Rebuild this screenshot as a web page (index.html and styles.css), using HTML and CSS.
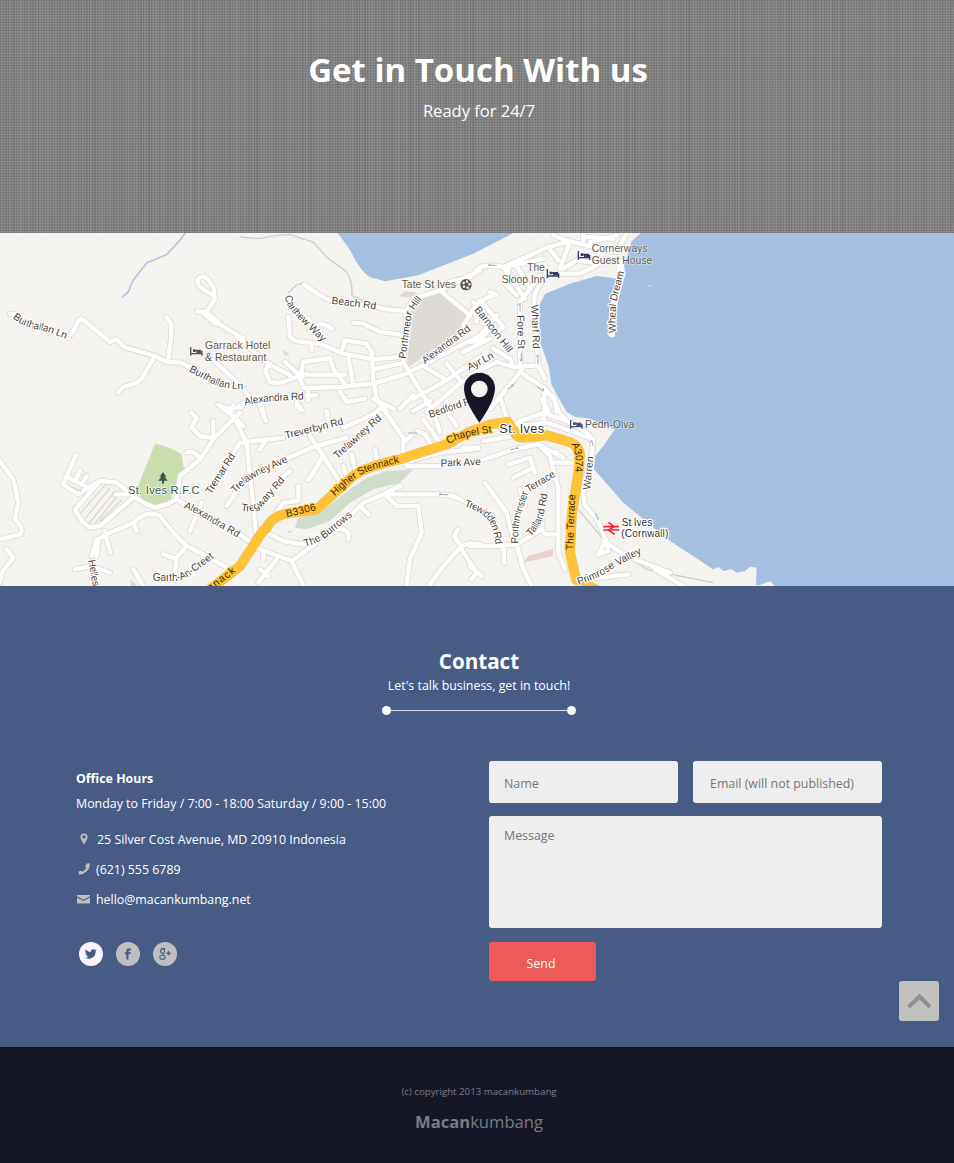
FILE: index.html
```html
<!DOCTYPE html>
<html lang="en">
<head>
<meta charset="utf-8">
<title>Macankumbang - Contact</title>
<link rel="stylesheet" href="styles.css">
</head>
<body>
<header class="hero">
  <div class="wrap">
    <h1>Get in Touch With us</h1>
    <p>Ready for 24/7</p>
  </div>
</header>

<svg class="map" viewBox="0 0 2862 1059" preserveAspectRatio="none" role="img" aria-label="Map of St. Ives">
  <defs>
    <g id="roads">
      <path transform="translate(0 -3)" d="M30 246h12M205 318L222 295 232 270Q240 258 250 264L330 330 350 322 372 345 465 372 500 390 545 392 575 410M500 257L514 275 514 310 504 388M465 372L425 440 405 455 370 465 355 482M640 190L600 165Q585 150 600 135Q620 130 640 165L645 200 620 240 592 238M620 240L660 275 645 275 612 245M655 275L730 320M640 385L690 430 730 470M655 518L680 530 725 525M700 520L690 545"/>
      <path transform="translate(720 -3)" d="M-10 315L90 400M135 390L185 435M90 395L75 415 90 450 120 453 200 425M85 395L150 430M190 465L180 440 190 390 270 378 280 410 320 465M200 428H315M190 468L300 465 400 455 500 425M325 378L340 455M305 355L315 325 380 335 395 360 400 450 410 500 440 540M240 335L310 365 400 382 480 375M400 412L480 395M145 255L150 315Q165 330 190 330L235 335M215 355V335M215 285L205 260M225 285Q240 265 275 290M340 272L370 275 420 300 480 308M192 158L240 190 270 205M410 225L440 232 500 237M500 237L490 390 510 425M500 237L520 200 600 175 720 115M600 175L690 250M500 425L720 310 770 250M510 425L580 540 600 600M555 405L620 445 520 500M620 395L665 450 560 540M620 445L720 375M665 450L740 400M205 470V505M200 490H230M300 480L320 510 375 500M400 500L460 530M10 470L30 500 0 520M60 510L70 540M170 510L185 535M700 210L710 270M480 530L520 490"/>
      <path transform="translate(1410 -3)" d="M-60 150L0 135 30 105 60 100 100 105 235 45 300 28 350 40 440 60M100 105L165 200M135 95L175 160M120 100L100 150 140 190M235 45L265 85M300 28L270 110M130 100L220 80M270 125L330 125 380 100M280 110L320 85 390 95M230 120L195 185 190 230 205 400M210 130L150 210 150 400M250 10L300 30M340 5V40M350 15L430 20M360 30L440 10M440 60L470 5M120 380L130 405 205 400 225 440M150 420L225 470 255 505 260 540M150 420L90 495 60 530M90 495L115 570M-20 280L20 215 75 185M30 205L100 285 80 300M0 330L30 325 60 290M-20 360L60 320M70 350L120 380M0 430L80 390 130 405M225 470L220 570M165 400L150 420M60 180L80 190"/>
      <path transform="translate(0 519)" d="M-5 160L40 220 55 290 45 340Q75 370 60 385L0 400M20 430L40 455 5 500 0 530M228 147L200 210 190 235 235 265 265 245 300 225 350 230 400 270M240 195L225 225M260 210L245 235M205 215L265 245M300 225L225 310 245 345 270 365 300 360 400 275M345 265H405M400 270L430 290 465 305 500 295 530 280 540 210 600 160 640 100 700 40 720 20M575 20L590 35 575 65 600 90 630 95M560 140Q575 130 600 155M640 45V95M540 285L560 300M720 110L630 250M605 290L570 375M680 300L720 240M290 450L295 400 320 385 400 350Q440 310 480 330L520 380 560 420 620 450 690 490M315 375L330 440M400 350L410 375M560 420L530 455 525 500M490 445L530 460M225 490L275 480 330 500M290 400L275 450M400 490L430 540M660 0L710 40 730 60"/>
      <path transform="translate(720 519)" d="M0 110L130 95M310 65L400 25 430 0M-20 30L20 110 45 350 50 390M60 0L78 45M60 130L75 105M260 15L265 50M170 0L180 10M210 90L250 150 300 230M145 155L215 125 320 95M205 222L250 150M110 320L130 290 175 285V240M100 240L150 195M410 -20L490 95V150M490 110L530 75 555 85 570 110M550 40L600 110M610 0L650 60M520 15L570 -15M500 180L600 180M510 165L600 140 715 128M490 155L500 180M80 380L130 405 190 415M0 385L60 430 155 465 190 540M155 465L230 410M330 330L370 290 430 265 480 240M430 265H600L640 270 680 290M440 270L470 300H535L545 380 510 460 500 535M360 300L385 325M290 370Q330 365 325 400M110 460L55 530M60 490L85 510M70 440V460M655 370Q630 390 665 420L610 480 570 535M665 420L690 412 720 415M665 430L710 500 695 520M335 145L345 190M405 130L410 160M310 180L320 215"/>
      <path transform="translate(1410 519)" d="M130 60L150 45 220 20 290 45M215 -20L235 15M250 -30L265 15M235 50L370 100M150 60L230 50M30 165L130 130 205 115 240 150 265 250 265 440 285 490M205 115L280 155M240 135L260 140M245 170H310M115 175L180 155 195 200M130 215L190 185M45 230L110 320 130 400M150 250L165 300M0 420H60L140 415 215 370M100 420L103 470M140 415L160 490 185 540M225 230L215 370 225 385H265M410 400L385 445 415 435 410 410M400 405L470 450 600 500 555 490 640 540M345 520L475 505M0 480L35 510M40 105L130 90M-20 125L25 125"/>
    </g>
    <path id="coast-road" d="M1670 530L1700 564 1745 588Q1785 612 1778 645L1762 720 1750 779 1754 815 1795 865 1818 925"/>
    <path id="main-road" d="M610 1085L720 999 765 930Q785 895 800 885Q815 850 860 842L950 829 1060 729Q1100 700 1200 679L1340 634 1410 596 1470 575 1523 566 1545 600Q1552 614 1570 614L1640 607 1710 627Q1738 640 1740 665L1735 719 1715 849 1710 959 1728 1040 1790 1070"/>
    <g id="bed"><path d="M0 0V26M0 20H34M34 12V26M9 11H30" fill="none" stroke="currentColor" stroke-width="4"/><path d="M7 7h8v8H7zM17 8h15v10H17z" fill="currentColor"/></g>
    <g class="tracks">
      <path id="t-burth1" d="M38 255Q70 282 110 289T230 332"/>
      <path id="t-burth2" d="M566 415L630 448Q660 466 720 469L800 468"/>
      <path id="t-beach" d="M994 212L1180 236"/>
      <path id="t-carthew" d="M854 190Q862 225 890 252L1000 360"/>
      <path id="t-porthmeor" d="M1217 378L1234 250Q1238 232 1290 170"/>
      <path id="t-alex1" d="M1275 394L1450 264"/>
      <path id="t-alex2" d="M735 518Q780 502 960 498"/>
      <path id="t-barnoon" d="M1422 230L1550 394"/>
      <path id="t-fore" d="M1551 247L1556 390"/>
      <path id="t-wharf" d="M1594 215L1600 390"/>
      <path id="t-ayr" d="M1408 413L1520 356"/>
      <path id="t-wheal" d="M1847 300Q1845 220 1852 195L1885 70"/>
      <path id="t-bedford" d="M1290 555L1450 500"/>
      <path id="t-tremar" d="M633 785L730 632"/>
      <path id="t-alex3" d="M550 825Q590 840 620 860L740 930"/>
      <path id="t-garth" d="M458 1043H530Q556 1040 580 1020L690 938"/>
      <path id="t-helles" d="M265 982L285 1100"/>
      <path id="t-stenn" d="M585 1110L640 1068 750 985"/>
      <path id="t-trev" d="M857 617L1070 565"/>
      <path id="t-trel" d="M1012 679L1180 528"/>
      <path id="t-trela" d="M705 782Q745 738 790 720L910 665"/>
      <path id="t-treg" d="M722 832Q768 845 800 805L880 714"/>
      <path id="t-b33" d="M860 853L990 821"/>
      <path id="t-higher" d="M1004 790Q1060 735 1095 719T1250 677"/>
      <path id="t-burrows" d="M915 941Q960 930 1000 896L1090 822"/>
      <path id="t-chapel" d="M1345 633Q1400 603 1520 594"/>
      <path id="t-park" d="M1322 701L1480 694"/>
      <path id="t-trew" d="M1392 819Q1440 835 1462 858Q1488 890 1488 980"/>
      <path id="t-a30" d="M1714 633Q1727 660 1727 680L1725 780"/>
      <path id="t-warren" d="M1770 771L1786 620"/>
      <path id="t-terr" d="M1585 779L1690 716"/>
      <path id="t-porthm" d="M1555 932Q1553 870 1565 840L1600 730"/>
      <path id="t-tall" d="M1593 911Q1620 880 1630 850L1655 720"/>
      <path id="t-theterr" d="M1719 952L1729 700"/>
      <path id="t-prim" d="M1735 1056Q1800 1035 1840 1005L1960 942"/>
    </g>
  </defs>

  <rect class="land" width="2862" height="1059"/>
  <path class="water" d="M1013 0L1050 50Q1080 115 1110 132L1155 145 1255 127 1420 62 1540 0ZM1922 0L1895 25 1880 75 1855 137 1790 129 1710 152 1635 182 1618 217 1620 327 1645 397 1655 457 1700 537 1725 552 1765 556 1845 589 1810 639 1785 669 1782 709 1870 809 1930 859 2010 924 2140 1009 2155 1002 2170 1014 2195 1009 2210 1019 2235 1014 2250 1001 2270 1004 2268 1056H2280L2310 1045 2325 1059H2862V0Z"/>
  <path class="gray" d="M1235 232L1245 200 1315 177 1410 252 1390 287 1270 372 1220 407ZM1195 190L1215 175 1250 178 1240 195ZM848 352L865 360 868 370 852 365Z"/>
  <path class="park" d="M465 632Q510 640 545 664L550 699 560 709 530 754 510 804 465 819 430 804 410 769Z"/>
  <path class="meadow" d="M885 884L895 854 960 839 1050 769 1100 734 1160 714 1240 709 1200 749 1120 769 1050 809 990 864 920 889ZM860 897L878 890 870 900ZM390 1037L410 1059H395Z"/>
  <path class="pink" d="M1570 989L1585 969 1660 947 1658 969Z"/>
  <path class="footpath" d="M720 12L780 17 Q830 5 870 5L940 27 980 72 1040 117Q1060 150 1055 187L1090 202M865 180L890 155 912 150M1735 829L1810 919 1940 1009 2140 1049"/>
  <path class="stream" d="M556 0L540 22 500 65 440 90 398 144 385 177 365 194"/>
  <use href="#roads" class="casing"/>
  <use href="#coast-road" class="casing"/>
  <use href="#roads" class="surface"/>
  <use href="#coast-road" class="surface"/>
  <path class="pier" d="M1862 90L1865 125 1850 180 1838 230 1835 303"/>
  <path class="parking" d="M315 757L240 842M330 765L255 857M345 775L268 870M350 792L285 872M365 800L300 865M210 760L245 775"/>
  <use href="#main-road" class="main-casing"/>
  <use href="#main-road" class="main-surface"/>

  <g class="arrows">
    <path d="M1490 97H1465l8-5M1560 235v-25l-5 8M1564 360v25l-5-8M1614 395v-30l-5 8M1520 470l22-14h-9M1610 460l20 14v-9M1225 600h25l-6-5M1530 650l25-4-7-4M1345 785h-28l7-5M1780 640l-5-18-5 8M1787 840l8 22"/>
  </g>

  <g class="lbl">
    <text><textPath href="#t-burth1" textLength="172">Burthallan Ln</textPath></text>
    <text><textPath href="#t-burth2" textLength="175">Burthallan Ln</textPath></text>
    <text><textPath href="#t-beach" textLength="134">Beach Rd</textPath></text>
    <text><textPath href="#t-carthew" textLength="180">Carthew Way</textPath></text>
    <text><textPath href="#t-porthmeor" textLength="190">Porthmeor Hill</textPath></text>
    <text><textPath href="#t-alex1" textLength="172">Alexandra Rd</textPath></text>
    <text><textPath href="#t-alex2" textLength="178">Alexandra Rd</textPath></text>
    <text><textPath href="#t-barnoon" textLength="165">Barnoon Hill</textPath></text>
    <text><textPath href="#t-fore" textLength="101">Fore St</textPath></text>
    <text><textPath href="#t-wharf" textLength="132">Wharf Rd</textPath></text>
    <text><textPath href="#t-ayr" textLength="84">Ayr Ln</textPath></text>
    <text><textPath href="#t-wheal" textLength="186">Wheal Dream</textPath></text>
    <text><textPath href="#t-bedford" textLength="148">Bedford Rd</textPath></text>
    <text><textPath href="#t-tremar" textLength="138">Tremar Rd</textPath></text>
    <text><textPath href="#t-alex3" textLength="185">Alexandra Rd</textPath></text>
    <text><textPath href="#t-garth" textLength="205">Garth-An-Creet</textPath></text>
    <text><textPath href="#t-helles" textLength="80">Helles</textPath></text>
    <text><textPath href="#t-trev" textLength="180">Treverbyn Rd</textPath></text>
    <text><textPath href="#t-trel" textLength="180">Trelawney Rd</textPath></text>
    <text><textPath href="#t-trela" textLength="188">Trelawney Ave</textPath></text>
    <text><textPath href="#t-treg" textLength="172">Tregwary Rd</textPath></text>
    <text><textPath href="#t-burrows" textLength="172">The Burrows</textPath></text>
    <text><textPath href="#t-park" textLength="121">Park Ave</textPath></text>
    <text><textPath href="#t-trew" textLength="162">Trewidden Rd</textPath></text>
    <text><textPath href="#t-warren" textLength="100">Warren</textPath></text>
    <text><textPath href="#t-terr" textLength="97">Terrace</textPath></text>
    <text><textPath href="#t-porthm" textLength="158">Porthminster</textPath></text>
    <text><textPath href="#t-tall" textLength="140">Talland Rd</textPath></text>
    <text><textPath href="#t-prim" textLength="214">Primrose Valley</textPath></text>
  </g>
  <g class="lbl on-main">
    <text><textPath href="#t-stenn" textLength="154">Stennack</textPath></text>
    <text><textPath href="#t-b33" textLength="92">B3306</textPath></text>
    <text><textPath href="#t-higher" textLength="224">Higher Stennack</textPath></text>
    <text><textPath href="#t-chapel" textLength="136">Chapel St</textPath></text>
    <text><textPath href="#t-a30" textLength="86">A3074</textPath></text>
    <text><textPath href="#t-theterr" textLength="168">The Terrace</textPath></text>
  </g>
  <g class="lbl poi">
    <text x="615" y="347" textLength="196">Garrack Hotel</text>
    <text x="615" y="383" textLength="184">&amp; Restaurant</text>
    <text x="1205" y="166" textLength="163">Tate St Ives</text>
    <text x="1582" y="115" textLength="52">The</text>
    <text x="1505" y="151" textLength="131">Sloop Inn</text>
    <text x="1775" y="56" textLength="168">Cornerways</text>
    <text x="1775" y="92" textLength="182">Guest House</text>
    <text x="1755" y="586" textLength="148">Pedn-Olva</text>
  </g>
  <g class="lbl town">
    <text class="green" x="384" y="784" textLength="214">St. Ives R.F.C</text>
    <text class="big" x="1498" y="600" textLength="134">St. Ives</text>
    <text x="1865" y="878" textLength="92">St Ives</text>
    <text x="1864" y="912" textLength="141">(Cornwall)</text>
  </g>

  <use href="#bed" x="572" y="342" color="#5c5148"/>
  <use href="#bed" x="1735" y="54" color="#34386d"/>
  <use href="#bed" x="1642" y="109" color="#34386d"/>
  <use href="#bed" x="1712" y="561" color="#46516d"/>
  <g transform="translate(1398 155)"><circle r="17" fill="#5c5148"/><g fill="#eae6df"><circle cx="-7" cy="-5" r="4"/><circle cx="3" cy="-9" r="4"/><circle cx="10" cy="-1" r="4"/><circle cx="-6" cy="6" r="4"/><circle cx="5" cy="9" r="4"/></g></g>
  <path fill="#3a5a40" d="M489 717l10 14h-5l9 12h-11v9h-6v-9h-11l9-12h-5z"/>
  <path fill="none" stroke="#ed2939" stroke-width="5" d="M1810 881H1857M1810 891H1857M1825 868L1843 881 1825 891 1844 904"/>
  <circle cx="1949" cy="158" r="3" fill="#dce6f0"/>
  <path fill="#151726" d="M1438 569Q1392 503 1392 466A46 46 0 0 1 1485 466Q1485 503 1438 569Z"/>
  <circle cx="1438" cy="468" r="25" fill="#f4f3f0"/>
</svg>

<main class="contact">
  <div class="wrap">
    <div class="heading">
      <h2>Contact</h2>
      <p>Let's talk business, get in touch!</p>
      <div class="rule"></div>
    </div>
    <div class="columns">
      <section class="info">
        <h3>Office Hours</h3>
        <p class="hours">Monday to Friday / 7:00 - 18:00 Saturday / 9:00 - 15:00</p>
        <ul class="details">
          <li class="address"><svg width="16" height="14" viewBox="0 0 16 14"><path fill-rule="evenodd" d="M8 12.8C6.500 9.500 4.400 7.400 4.400 5A3.600 3.600 0 0 1 11.600 5C11.600 7.400 9.500 9.500 8 12.800ZM8 3.200a1.700 1.700 0 1 0 .1 0Z"/></svg>25 Silver Cost Avenue, MD 20910 Indonesia</li>
          <li><svg width="16" height="14" viewBox="0 0 16 14"><path d="M2.500 9.600L5.300 8.700 6.300 9.700Q9.200 8.600 10.300 5.400L9.200 4.200 10.700 1.600 13.500 1.200Q14.400 5.200 11 9.100 7 13 3.100 12.400Z"/></svg>(621) 555 6789</li>
          <li><svg width="16" height="14" viewBox="0 0 16 14"><path d="M1 3H14V4.300L7.500 7.700 1 4.300ZM1 5.500L7.500 9 14 5.500V11.500H1Z"/></svg>hello@macankumbang.net</li>
        </ul>
        <div class="social">
          <a class="on" aria-label="Twitter"><svg width="12" height="12" viewBox="0 0 24 24"><path d="M23.600 4.600a10 10 0 0 1-2.800.8 4.900 4.900 0 0 0 2.100-2.700 10 10 0 0 1-3.100 1.200A4.900 4.900 0 0 0 11.500 8.300 13.900 13.900 0 0 1 1.400 3.200a4.900 4.900 0 0 0 1.500 6.500 4.900 4.900 0 0 1-2.200-.6 4.900 4.900 0 0 0 3.900 4.900 4.900 4.900 0 0 1-2.200.1 4.900 4.900 0 0 0 4.600 3.400A9.900 9.900 0 0 1 0 19.500 13.900 13.900 0 0 0 21.100 7.100 10 10 0 0 0 23.600 4.600Z"/></svg></a>
          <a aria-label="Facebook"><svg width="14" height="14" viewBox="0 0 14 14"><path d="M5.300 12.500V7.100H3.800V5.200H5.300V3.900Q5.300 1.500 7.700 1.500H9.900V3.400H8.500Q7.500 3.400 7.500 4.300V5.200H9.900L9.600 7.100H7.500V12.500Z"/></svg></a>
          <a aria-label="Google Plus"><svg width="14" height="14" viewBox="0 0 14 14"><g fill="none" stroke="#475b85" stroke-width="1.100"><ellipse cx="4.600" cy="4" rx="1.900" ry="2.400"/><path d="M4.500 1.500H7.200M5.500 6.400Q4 7.300 6 8.200"/><ellipse cx="4.500" cy="10.200" rx="2.700" ry="2"/><path stroke-width="1.400" d="M8.400 6.200H12.600M10.500 4.100V8.300"/></g></svg></a>
        </div>
      </section>
      <form class="form">
        <div class="row">
          <input type="text" placeholder="Name">
          <input type="text" class="email" placeholder="Email (will not published)">
        </div>
        <textarea placeholder="Message"></textarea>
        <button type="button">Send</button>
      </form>
    </div>
  </div>
  <a class="to-top" aria-label="Back to top"><svg width="40" height="40" viewBox="0 0 40 40"><path d="M9.500 26L20.500 15.500 31 26" fill="none" stroke="#919191" stroke-width="4.200"/></svg></a>
</main>

<footer class="footer">
  <div class="wrap">
    <p>(c) copyright 2013 macankumbang</p>
    <div class="brand"><b>Macan</b>kumbang</div>
  </div>
</footer>
</body>
</html>
```

FILE: styles.css
```css
* { box-sizing: border-box; }
body {
  margin: 0;
  font-family: "Open Sans", sans-serif;
  font-size: 12.4px;
  color: #fff;
  background: #151726;
}
h1, h2, h3, p, ul { margin: 0; padding: 0; }
.wrap { width: 806px; margin-left: 76px; }

.hero {
  height: 233px;
  padding-top: 45px;
  text-align: center;
  background-color: #888;
  background-image:
    repeating-linear-gradient(90deg, rgba(0,0,0,.1) 0, rgba(0,0,0,.1) 1px, transparent 1.4px, transparent 2.7px),
    repeating-linear-gradient(0deg, rgba(0,0,0,.09) 0, rgba(255,255,255,.09) 1.3px, rgba(0,0,0,.09) 2.7px);
}
.hero h1 { font-size: 33px; line-height: 50px; font-weight: 700; margin-left: -1px; margin-right: 1px; }
.hero p { font-size: 16.5px; line-height: 24px; margin-top: 4px; }

.map { display: block; width: 954px; height: 353px; }
.land { fill: #f4f3f0; }
.water { fill: #a4bfdf; }
.gray { fill: #dedbd7; }
.park { fill: #cbdfae; }
.meadow { fill: #d0ddcb; }
.pink { fill: #ebd0ce; }
.footpath { fill: none; stroke: #d0ccc5; stroke-width: 4; }
.stream { fill: none; stroke: #b0c8e6; stroke-width: 5; }
.casing, .surface, .main-casing, .main-surface, .pier { fill: none; stroke-linecap: round; stroke-linejoin: round; }
.casing { stroke: #dedad3; stroke-width: 18; }
.surface { stroke: #fff; stroke-width: 13; }
.pier { stroke: #fff; stroke-width: 20; }
.parking { stroke: #dbd7cf; stroke-width: 4; fill: none; }
.main-casing { stroke: #eebb5c; stroke-width: 30; }
.main-surface { stroke: #ffc335; stroke-width: 27; }
.arrows path { fill: none; stroke: #9caabd; stroke-width: 3; }
.tracks path { fill: none; }
.lbl text {
  font-family: "Liberation Sans", Arial, sans-serif;
  font-size: 31px;
  fill: #47423d;
  stroke: #fff;
  stroke-width: 7px;
  stroke-linejoin: round;
  paint-order: stroke;
}
.lbl.on-main text { fill: #402608; stroke: #ffc335; }
.lbl.poi text { fill: #62594f; stroke: rgba(255,255,255,.5); stroke-width: 5px; }
.lbl.town text { fill: #333; }
.lbl.town .green { fill: #38523e; font-size: 33px; stroke-width: 4px; }
.lbl.town .big { font-size: 38px; }

.contact { position: relative; height: 461px; padding-top: 61px; background: #475b85; }
.heading { text-align: center; }
.heading h2 { font-size: 20.6px; line-height: 28px; font-weight: 700; }
.heading p { line-height: 20px; margin-top: 1px; }
.rule { position: relative; width: 192px; height: 1px; margin: 14px auto 0; background: #dfe1e6; }
.rule::before, .rule::after {
  content: "";
  position: absolute;
  top: -4px;
  width: 9px;
  height: 9px;
  border-radius: 50%;
  background: #fff;
}
.rule::before { left: -1px; }
.rule::after { right: -1px; }
.columns { display: flex; justify-content: space-between; margin-top: 50px; }
.info h3 { font-size: 12.4px; line-height: 20px; margin-top: 8px; }
.hours { line-height: 20px; margin-top: 5px; }
.details { list-style: none; margin-top: 15px; display: grid; row-gap: 10px; }
.details li { display: flex; align-items: center; gap: 4px; height: 20px; }
.details .address { gap: 5px; }
.details svg { fill: #bfbfbf; }
.social { display: flex; gap: 13px; margin: 33px 0 0 3px; }
.social a { width: 24px; height: 24px; border-radius: 50%; background: #bfbfbf; display: flex; align-items: center; justify-content: center; }
.social .on { background: #fbf3fd; }
.social svg { fill: #475b85; }

.form { width: 393px; }
.row { display: flex; gap: 15px; }
input, textarea, button { font: inherit; border: 0; border-radius: 3px; outline: 0; display: block; }
input, textarea { background: #eee; color: #777; }
::placeholder { color: #777; opacity: 1; }
input { width: 189px; height: 42px; padding: 3px 15px 0; }
.email { padding-left: 17px; }
textarea { width: 393px; height: 112px; margin-top: 13px; padding: 11px 15px; resize: none; }
button { width: 107px; height: 39px; margin-top: 14px; padding: 3px 3px 0 0; color: #fff; background: #eb5b57; }
.to-top { position: absolute; right: 15px; bottom: 26px; width: 40px; height: 40px; background: #c1c1c1; border-radius: 3px; }
.to-top svg { display: block; }

.footer { height: 116px; padding-top: 37px; text-align: center; color: #7b7b81; }
.footer p { font-size: 9.7px; line-height: 16px; }
.brand { font-size: 16.6px; line-height: 24px; margin-top: 10px; }
```
